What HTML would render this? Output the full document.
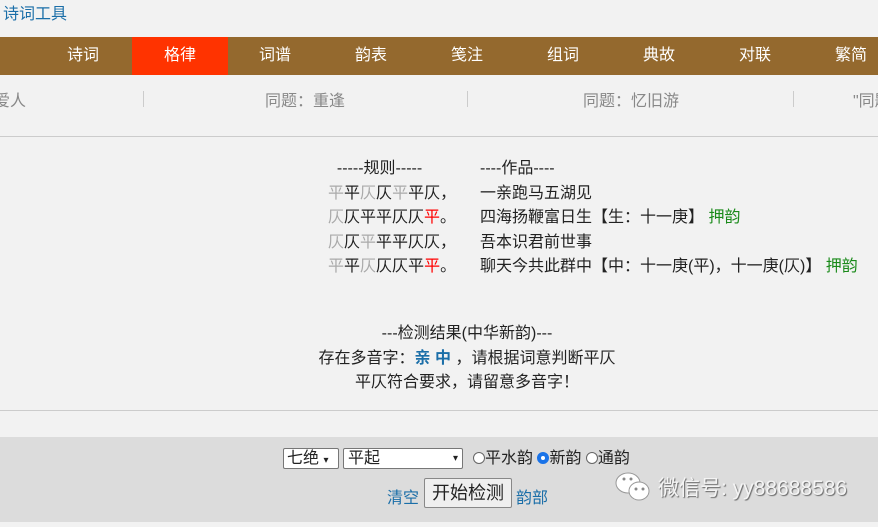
<!DOCTYPE html>
<html><head><meta charset="utf-8"><style>
*{margin:0;padding:0;box-sizing:border-box}
body{width:878px;height:527px;background:#f2f2f2;font-family:"Liberation Sans","Noto Sans CJK SC",sans-serif;font-size:16px;color:#222;position:relative;overflow:hidden}
.a{position:absolute;white-space:nowrap}
.nav{position:absolute;top:37px;left:0;width:878px;height:38px;background:#94692e}
.nav div{position:absolute;top:0;width:96px;height:38px;line-height:38px;text-align:center;color:#fff;font-size:16px}
.g{color:#aaa}.r{color:#f00}.gr{color:#1a8a1a}
.sep{position:absolute;top:91px;width:1px;height:16px;background:#ccc}
.ln{line-height:24.6px}
</style></head><body>
<div class="a" style="left:3px;top:0px;color:#1a6ea8;font-size:16px">诗词工具</div>
<div class="nav">
<div style="left:35px">诗词</div>
<div style="left:132px;background:#ff3300">格律</div>
<div style="left:227px">词谱</div>
<div style="left:323px">韵表</div>
<div style="left:419px">笺注</div>
<div style="left:515px">组词</div>
<div style="left:611px">典故</div>
<div style="left:707px">对联</div>
<div style="left:803px">繁简</div>
</div>
<div class="a" style="left:-6px;top:87px;color:#888">爱人</div>
<div class="sep" style="left:143px"></div>
<div class="a" style="left:265px;top:87px;color:#888">同题：重逢</div>
<div class="sep" style="left:467px"></div>
<div class="a" style="left:583px;top:87px;color:#888">同题：忆旧游</div>
<div class="sep" style="left:793px"></div>
<div class="a" style="left:853px;top:87px;color:#888">"同题</div>
<div class="a" style="left:0;top:136px;width:878px;height:1px;background:#ccc"></div>

<div class="a ln" style="left:328px;top:157px">
<div>&nbsp;&nbsp;-----规则-----</div>
<div><span class="g">平</span>平<span class="g">仄</span>仄<span class="g">平</span>平仄，</div>
<div><span class="g">仄</span>仄平平仄仄<span class="r">平</span>。</div>
<div><span class="g">仄</span>仄<span class="g">平</span>平平仄仄，</div>
<div><span class="g">平</span>平<span class="g">仄</span>仄仄平<span class="r">平</span>。</div>
</div>
<div class="a ln" style="left:480px;top:157px">
<div>----作品----</div>
<div>一亲跑马五湖见</div>
<div>四海扬鞭富日生【生：十一庚】 <span class="gr">押韵</span></div>
<div>吾本识君前世事</div>
<div>聊天今共此群中【中：十一庚(平)，十一庚(仄)】 <span class="gr">押韵</span></div>
</div>

<div class="a ln" style="left:0;width:934px;top:322px;text-align:center">
<div>---检测结果(中华新韵)---</div>
<div>存在多音字：<b style="color:#1a6ea8">亲 中</b> ，请根据词意判断平仄</div>
<div>平仄符合要求，请留意多音字！</div>
</div>
<div class="a" style="left:0;top:410px;width:878px;height:1px;background:#ccc"></div>

<div class="a" style="left:0;top:437px;width:878px;height:85px;background:#dcdcdc"></div>
<div class="a" style="left:283px;top:448px;width:56px;height:21px;background:#fff;border:1px solid #777;border-radius:2px;padding-left:3px;line-height:19px">七绝 <span style="font-size:10px">▾</span></div>
<div class="a" style="left:343px;top:448px;width:120px;height:21px;background:#fff;border:1px solid #777;border-radius:2px;padding-left:4px;line-height:19px">平起<span style="position:absolute;right:4px;font-size:10px">▾</span></div>
<div class="a" style="left:473px;top:449px;line-height:19px"><span style="display:inline-block;width:12px;height:12px;border:1px solid #666;border-radius:50%;background:#fff;vertical-align:-1px"></span>平水韵 <span style="display:inline-block;width:12px;height:12px;border:4px solid #1a73e8;border-radius:50%;background:#fff;vertical-align:-1px"></span>新韵 <span style="display:inline-block;width:12px;height:12px;border:1px solid #666;border-radius:50%;background:#fff;vertical-align:-1px"></span>通韵</div>
<div class="a" style="left:387px;top:484px;color:#1a6ea8">清空</div>
<div class="a" style="left:424px;top:478px;width:88px;height:30px;background:#efefef;border:1px solid #888;border-radius:2px;text-align:center;line-height:28px;font-size:18px">开始检测</div>
<div class="a" style="left:516px;top:484px;color:#1a6ea8">韵部</div>
<svg class="a" style="left:614px;top:470px" width="40" height="34" viewBox="0 0 40 34"><ellipse cx="14" cy="13" rx="12" ry="10" fill="#fff" stroke="#999"/><ellipse cx="25" cy="21" rx="10" ry="9" fill="#fff" stroke="#999"/><circle cx="22" cy="19" r="1.5" fill="#888"/><circle cx="29" cy="19" r="1.5" fill="#888"/><circle cx="10" cy="9" r="1.5" fill="#888"/><circle cx="17" cy="9" r="1.5" fill="#888"/></svg>
<div class="a" style="left:658px;top:472px;font-size:21px;color:#f4f4f4;text-shadow:1px 1px 1px #666">微信号: yy88688586</div>
<div class="a" style="left:0;top:522px;width:878px;height:5px;background:#f2f2f2"></div>
</body></html>
